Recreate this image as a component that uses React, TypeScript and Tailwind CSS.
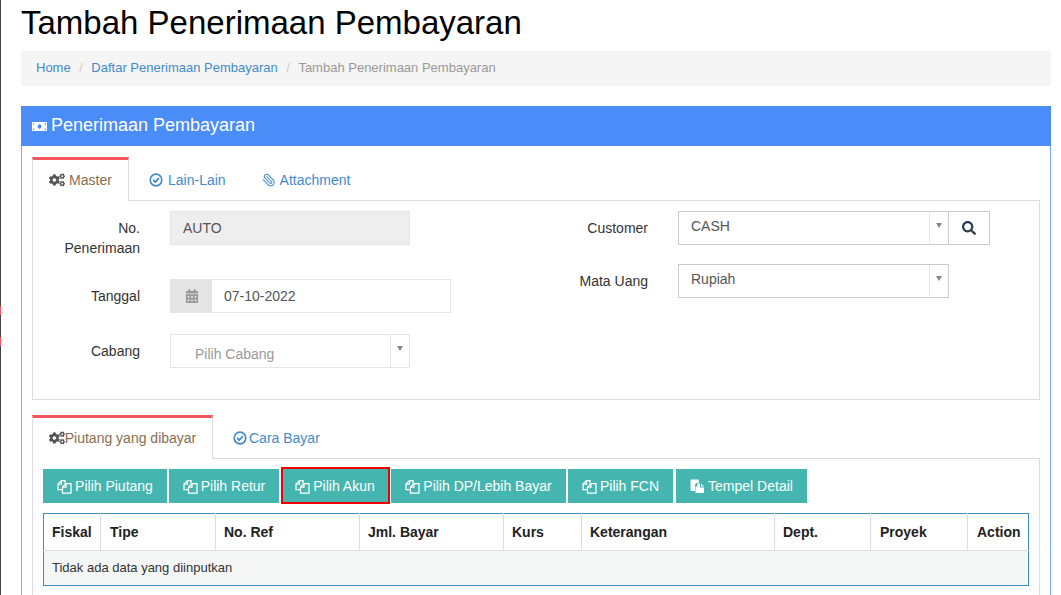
import { FaCalendarAlt, FaCogs, FaMoneyBill, FaSearch } from "react-icons/fa";
import { Paperclip } from "lucide-react";
import clsx from "clsx";

const columns = [
  { label: "Fiskal", width: 57, pad: "pl-[8px]" },
  { label: "Tipe", width: 115, pad: "pl-[9px]" },
  { label: "No. Ref", width: 144, pad: "pl-[8px]" },
  { label: "Jml. Bayar", width: 144, pad: "pl-[8px]" },
  { label: "Kurs", width: 78, pad: "pl-[8px]" },
  { label: "Keterangan", width: 193, pad: "pl-[8px]" },
  { label: "Dept.", width: 96, pad: "pl-[8px]" },
  { label: "Proyek", width: 97, pad: "pl-[9px]" },
  { label: "Action", width: 61, pad: "pl-[9px]" },
];

const buttons = [
  { label: "Pilih Piutang", width: 124, mr: "mr-[2px]" },
  { label: "Pilih Retur", width: 110, mr: "mr-[2px]" },
  { label: "Pilih Akun", width: 108, mr: "mr-[2px]", marked: true },
  { label: "Pilih DP/Lebih Bayar", width: 175, mr: "mr-[2px]" },
  { label: "Pilih FCN", width: 105, mr: "mr-[3px]" },
  { label: "Tempel Detail", width: 131, mr: "", paste: true },
];

function FilesIcon() {
  return (
    <svg width="15" height="15" viewBox="0 0 15 15" fill="none" stroke="currentColor" strokeWidth="1.25" className="shrink-0">
      <path d="M5.5 10.5H1V5L4.5 1.5H8V4.5" />
      <path d="M4.5 1.5V5H1" />
      <path d="M5.5 14V8L9 4.5H14V14Z" />
      <path d="M9 4.5V8H5.5" />
    </svg>
  );
}

function PasteIcon() {
  return (
    <svg width="15" height="15" viewBox="0 0 15 15" fill="currentColor" className="shrink-0">
      <path d="M0.5 1.2C0.5 0.8 0.8 0.5 1.2 0.5H8C8.4 0.5 8.7 0.8 8.7 1.2V4H6.5L5 5.5V12H1.2C0.8 12 0.5 11.7 0.5 11.3Z" />
      <path d="M7.5 4.5V7.5H5.5V14H14V8.5H10V4.5Z" />
      <path d="M11 4.5L14 7.5H11Z" />
    </svg>
  );
}

function CheckCircle() {
  return (
    <svg width="14" height="14" viewBox="0 0 14 14" fill="none" stroke="currentColor" className="shrink-0">
      <circle cx="7" cy="7" r="5.8" strokeWidth="1.7" />
      <path d="M4.2 7L6.3 9L9.9 5.2" strokeWidth="1.8" />
    </svg>
  );
}

function SelectArrow({ className }: { className?: string }) {
  return (
    <span className={clsx("flex w-[19px] justify-center border-l border-[#e5e5e5] pt-[11px]", className)}>
      <span className="h-0 w-0 border-x-[3.5px] border-t-[5px] border-x-transparent border-t-[#888]" />
    </span>
  );
}

function FormRow({ label, children, className }: { label: React.ReactNode; children: React.ReactNode; className?: string }) {
  return (
    <div className={clsx("flex", className)}>
      <div className="w-[137px] shrink-0 pr-[30px] pt-[7px] text-right text-[14px] leading-[20px] text-[#333]">{label}</div>
      {children}
    </div>
  );
}

export default function App() {
  return (
    <div className="flex h-[595px] w-[1061px] overflow-hidden bg-white font-['Liberation_Sans',Arial,sans-serif]">
      <div className="relative w-px shrink-0 bg-[#444]">
        <span className="absolute left-0 top-[306px] h-[9px] w-px bg-[#f3565d]" />
        <span className="absolute left-0 top-[337px] h-[9px] w-px bg-[#f3565d]" />
      </div>

      <main className="ml-[20px] w-[1030px] shrink-0">
        <h1 className="h-[51px] pt-[4px] text-[33px] leading-[38px] text-black">Tambah Penerimaan Pembayaran</h1>

        <nav className="flex h-[35px] items-center bg-[#f5f5f5] pb-[2px] pl-[15px] text-[13px] text-[#999]">
          <a className="text-[#428bca]">Home</a>
          <span className="px-[8.5px] text-[#ccc]">/</span>
          <a className="text-[#428bca]">Daftar Penerimaan Pembayaran</a>
          <span className="px-[8.5px] text-[#ccc]">/</span>
          <span>Tambah Penerimaan Pembayaran</span>
        </nav>

        <section className="mt-[20px] h-[600px] border-x border-[#7ea9f3]">
          <header className="-mx-px flex h-[40px] items-center bg-[#4b8df8] pb-[2px] pl-[11px] text-[18px] text-white">
            <FaMoneyBill size={15} className="mr-[4px] mt-[2px]" />
            Penerimaan Pembayaran
          </header>

          <div className="px-[10px] pt-[11px]">
            {/* master tabs */}
            <div className="flex h-[44px] border-b border-[#ddd] text-[14px]">
              <div className="-mb-px flex h-[44px] w-[97px] items-center justify-center gap-[4px] border-x border-t-[3px] border-x-[#ddd] border-t-[#f3565d] bg-white pb-[1px] text-[#8a6d50]">
                <FaCogs size={16} className="text-[#555]" />
                Master
              </div>
              <div className="flex items-center gap-[5px] pl-[20px] pt-[3px] text-[#428bca]">
                <CheckCircle />
                Lain-Lain
              </div>
              <div className="flex items-center gap-[4px] pl-[36px] pt-[3px] text-[#428bca]">
                <Paperclip size={14} strokeWidth={1.8} className="-scale-x-100" />
                Attachment
              </div>
            </div>

            <div className="flex h-[199px] border-x border-b border-[#ddd] pt-[10px]">
              <div className="w-[508px]">
                <FormRow label={<>No.<br />Penerimaan</>}>
                  <div className="flex h-[34px] w-[240px] items-center border border-[#e5e5e5] bg-[#eee] pl-[12px] text-[14px] text-[#555]">AUTO</div>
                </FormRow>
                <FormRow label="Tanggal" className="mt-[21px]">
                  <div className="flex h-[34px] w-[281px] border border-[#e5e5e5] text-[14px] text-[#555]">
                    <span className="flex w-[41px] items-center justify-center bg-[#e5e5e5] text-[#999]">
                      <FaCalendarAlt size={14} />
                    </span>
                    <span className="flex items-center pl-[12px]">07-10-2022</span>
                  </div>
                </FormRow>
                <FormRow label="Cabang" className="mt-[21px]">
                  <div className="flex h-[34px] w-[240px] border border-[#e5e5e5] text-[14px] text-[#999]">
                    <span className="flex-1 pl-[24px] pt-[10px] leading-[18px]">Pilih Cabang</span>
                    <SelectArrow />
                  </div>
                </FormRow>
              </div>

              <div>
                <FormRow label="Customer">
                  <div className="flex">
                    <div className="flex h-[34px] w-[271px] border border-[#ccc] text-[14px] text-[#555]">
                      <span className="flex-1 pl-[12px] pt-[5px] leading-[18px]">CASH</span>
                      <SelectArrow />
                    </div>
                    <button type="button" className="flex h-[34px] w-[41px] items-center justify-center border border-l-0 border-[#ccc] text-[#2d3e50]">
                      <FaSearch size={14} />
                    </button>
                  </div>
                </FormRow>
                <FormRow label="Mata Uang" className="mt-[19px]">
                  <div className="flex h-[34px] w-[271px] border border-[#ccc] text-[14px] text-[#555]">
                    <span className="flex-1 pl-[12px] pt-[5px] leading-[18px]">Rupiah</span>
                    <SelectArrow />
                  </div>
                </FormRow>
              </div>
            </div>

            {/* detail tabs */}
            <div className="mt-[15px] flex h-[44px] border-b border-[#ddd] text-[14px]">
              <div className="-mb-px flex h-[44px] w-[181px] items-center justify-center gap-0 border-x border-t-[3px] border-x-[#ddd] border-t-[#f3565d] bg-white pb-[1px] text-[#8a6d50]">
                <FaCogs size={16} className="text-[#555]" />
                Piutang yang dibayar
              </div>
              <div className="flex items-center gap-[2px] pl-[20px] pt-[3px] text-[#428bca]">
                <CheckCircle />
                Cara Bayar
              </div>
            </div>

            <div className="h-[200px] border-x border-[#ddd] px-[10px] pt-[10px]">
              <div className="flex">
                {buttons.map((b) => (
                  <button
                    key={b.label}
                    type="button"
                    style={{ width: b.width }}
                    className={clsx("relative flex h-[34px] items-center justify-center gap-[3px] bg-[#45b6af] text-[14px] text-white", b.mr)}
                  >
                    {b.paste ? <PasteIcon /> : <FilesIcon />}
                    {b.label}
                    {b.marked && <span className="absolute -bottom-px -right-px -top-[2px] left-0 border-2 border-[#f00000]" />}
                  </button>
                ))}
              </div>

              <table className="mt-[10px] w-[986px] table-fixed border-collapse border border-[#3c8dbc] text-[14px] text-[#333]">
                <colgroup>
                  {columns.map((c) => (
                    <col key={c.label} style={{ width: c.width }} />
                  ))}
                </colgroup>
                <thead>
                  <tr className="h-[37px]">
                    {columns.map((c) => (
                      <th key={c.label} className={clsx("border-b border-l border-[#dcdcdc] pt-px text-left font-bold text-[#222] first:border-l-0", c.pad)}>
                        {c.label}
                      </th>
                    ))}
                  </tr>
                </thead>
                <tbody>
                  <tr className="h-[35px] bg-[#f5f7f6]">
                    <td colSpan={9} className="pb-px pl-[8px] text-[13px]">Tidak ada data yang diinputkan</td>
                  </tr>
                </tbody>
              </table>
            </div>
          </div>
        </section>
      </main>
    </div>
  );
}
